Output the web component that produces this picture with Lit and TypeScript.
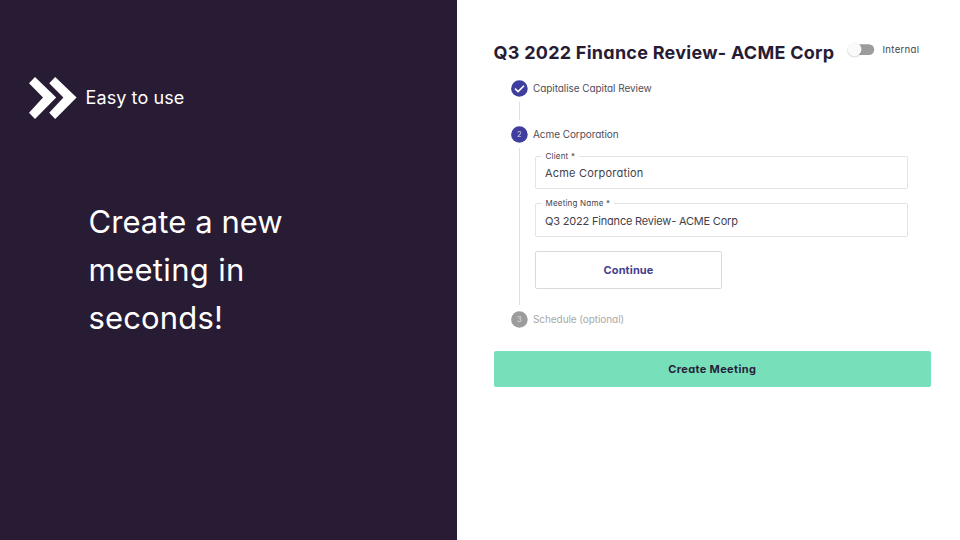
import { LitElement, html, css, svg } from "lit";
import { customElement, property } from "lit/decorators.js";
import { classMap } from "lit/directives/class-map.js";

@customElement("promo-panel")
export class PromoPanel extends LitElement {
  static styles = css`
    :host {
      display: block;
      box-sizing: border-box;
      padding: 76px 0 0 28px;
      background: #281b34;
      color: #fff;
      font-family: Inter, "Open Sans", sans-serif;
    }
    .tag { display: flex; align-items: center; height: 43px; }
    .mark { display: block; width: 50px; height: 43px; }
    .tag-text { margin-left: 7.5px; font-size: 18px; line-height: 24px; font-weight: 380; letter-spacing: 0.1px; }
    .headline {
      margin: 78.5px 0 0 60.5px;
      font-size: 31px;
      line-height: 48px;
      font-weight: 380;
    }
    .line { display: block; white-space: nowrap; }
    .l1 { letter-spacing: 0.06px; }
    .l2 { letter-spacing: 0.34px; }
    .l3 { letter-spacing: 0.15px; }
  `;
  render() {
    return html`
      <div class="tag">
        <svg class="mark" viewBox="0 0 50 43" fill="#fff">
          <path d="M1 7.3 7 1 28.2 21.6 7 43 1 36.7 15 21.6Z" />
          <path d="M21.2 7.3 27.2 1 48.6 21.6 27.2 43 21.2 36.7 35.4 21.6Z" />
        </svg>
        <span class="tag-text">Easy to use</span>
      </div>
      <div class="headline">
        <span class="line l1">Create a new</span>
        <span class="line l2">meeting in</span>
        <span class="line l3">seconds!</span>
      </div>
    `;
  }
}

@customElement("step-header")
export class StepHeader extends LitElement {
  @property() label = "";
  @property() mark = "";
  @property({ type: Boolean }) done = false;
  @property({ type: Boolean }) muted = false;

  static styles = css`
    :host { display: block; }
    .row { display: flex; align-items: center; height: 17px; color: #514d57; }
    .icon { display: block; width: 17px; height: 17px; }
    .disc { fill: #3f3d9e; }
    .num { fill: #d6d5ec; font-size: 7.5px; text-anchor: middle; }
    .label { margin-left: 5px; font-size: 10px; line-height: 17px; letter-spacing: -0.07px; white-space: nowrap; }
    .muted { color: #a9a9a9; }
    .muted .disc { fill: #9c9c9c; }
    .muted .num { fill: #dedede; }
  `;
  render() {
    return html`
      <div class=${classMap({ row: true, muted: this.muted })}>
        <svg class="icon" viewBox="0 0 17 17">
          <circle class="disc" cx="8.4" cy="8.5" r="8.3" />
          ${this.done
            ? svg`<path d="M4 8.7 7.1 11.6 13 5.7" fill="none" stroke="#fff" stroke-width="1.6" />`
            : svg`<text class="num" x="8.4" y="11.3">${this.mark}</text>`}
        </svg>
        <span class="label">${this.label}</span>
      </div>
    `;
  }
}

@customElement("outlined-field")
export class OutlinedField extends LitElement {
  @property() label = "";
  @property() value = "";
  @property({ type: Boolean }) tight = false;

  static styles = css`
    :host { display: block; }
    .box {
      position: relative;
      box-sizing: border-box;
      height: 100%;
      padding: 0 9px;
      border: 1px solid #e4e4e4;
      border-radius: 2px;
      color: #45414c;
    }
    .label {
      position: absolute;
      top: -7px;
      left: 5.5px;
      padding: 0 4px;
      background: #fff;
      font-size: 8px;
      line-height: 12px;
      letter-spacing: 0.2px;
      white-space: nowrap;
    }
    .value { font-size: 11px; line-height: 33px; letter-spacing: 0.2px; white-space: nowrap; }
    .tight { line-height: 34px; letter-spacing: -0.19px; }
  `;
  render() {
    return html`
      <div class="box">
        <span class="label">${this.label} *</span>
        <div class=${classMap({ value: true, tight: this.tight })}>${this.value}</div>
      </div>
    `;
  }
}

@customElement("meeting-form")
export class MeetingForm extends LitElement {
  static styles = css`
    :host {
      display: block;
      box-sizing: border-box;
      padding: 40px 29px 0 36.5px;
      background: #fff;
      font-family: Inter, "Open Sans", sans-serif;
      font-feature-settings: "cv11";
    }
    .head { display: flex; height: 25px; }
    .title { margin: 0; width: 341px; font-size: 18px; line-height: 25px; font-weight: 700; letter-spacing: 0.26px; white-space: nowrap; color: #281b34; }
    .switch { display: block; width: 30px; height: 19px; margin-left: 12.5px; }
    .switch-label { margin-left: 5.5px; font-size: 9.6px; line-height: 19px; letter-spacing: 0.28px; color: #45414c; }
    .steps { margin: 15px 0 0 17.5px; }
    .rail { box-sizing: border-box; margin-left: 8px; border-left: 1px solid #dfdfdf; }
    .short { height: 18px; margin-top: 5px; margin-bottom: 5.5px; }
    .long { height: 157px; margin-top: 5px; margin-bottom: 6px; padding: 8px 0 0 15px; }
    .form { display: grid; grid-template-rows: 33px 34px 38px; gap: 14px; width: 373px; }
    .btn { box-sizing: border-box; border-radius: 2px; font-size: 11px; font-weight: 700; text-align: center; }
    .next { width: 187px; line-height: 36px; border: 1px solid #dadada; color: #443f8e; letter-spacing: 0.13px; }
    .create { margin-top: 23.5px; height: 35.5px; line-height: 36px; background: #77dfba; color: #281f3a; letter-spacing: 0.35px; }
  `;
  render() {
    return html`
      <div class="head">
        <h1 class="title">Q3 2022 Finance Review- ACME Corp</h1>
        <svg class="switch" viewBox="0 0 30 19">
          <rect x="4" y="4.2" width="23.2" height="10.8" rx="5.4" fill="#9c9c9c" />
          <circle cx="7.5" cy="10.1" r="7.6" fill="#000" opacity=".07" />
          <circle cx="7.5" cy="10" r="7.2" fill="#000" opacity=".08" />
          <circle cx="7.5" cy="9.4" r="7" fill="#fafafa" />
        </svg>
        <span class="switch-label">Internal</span>
      </div>
      <div class="steps">
        <step-header label="Capitalise Capital Review" done></step-header>
        <div class="rail short"></div>
        <step-header label="Acme Corporation" mark="2"></step-header>
        <div class="rail long">
          <div class="form">
            <outlined-field label="Client" value="Acme Corporation"></outlined-field>
            <outlined-field label="Meeting Name" value="Q3 2022 Finance Review- ACME Corp" tight></outlined-field>
            <div class="btn next">Continue</div>
          </div>
        </div>
        <step-header label="Schedule (optional)" mark="3" muted></step-header>
      </div>
      <div class="btn create">Create Meeting</div>
    `;
  }
}

@customElement("app-root")
export class AppRoot extends LitElement {
  static styles = css`
    :host { display: grid; grid-template-columns: 457px 503px; width: 960px; height: 540px; overflow: hidden; }
  `;
  render() {
    return html`<promo-panel></promo-panel><meeting-form></meeting-form>`;
  }
}
